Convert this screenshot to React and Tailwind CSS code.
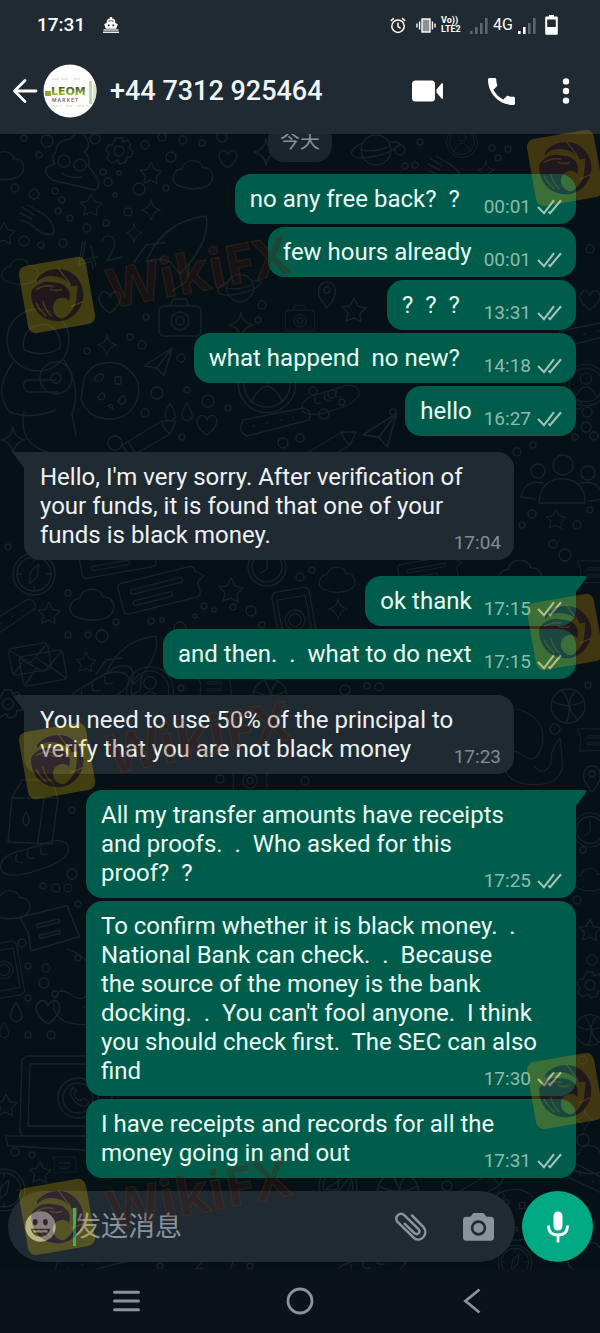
import React from "react";

const NB = "\u00a0";

const messages = [
  { from: "me", time: "00:01", text: `no any free back?${NB} ?${NB}${NB}` },
  { from: "me", time: "00:01", text: "few hours already" },
  { from: "me", time: "13:31", text: `?${NB} ?${NB} ?${NB}${NB}` },
  { from: "me", time: "14:18", text: `what happend${NB} no new?${NB}${NB}` },
  { from: "me", time: "16:27", text: "hello" },
  {
    from: "them",
    time: "17:04",
    first: true,
    wide: true,
    text: "Hello, I'm very sorry. After verification of\nyour funds, it is found that one of your\nfunds is black money.",
  },
  { from: "me", time: "17:15", first: true, text: "ok thank" },
  { from: "me", time: "17:15", text: `and then.${NB} .${NB} what to do next` },
  {
    from: "them",
    time: "17:23",
    first: true,
    wide: true,
    text: "You need to use 50% of the principal to\nverify that you are not black money",
  },
  {
    from: "me",
    time: "17:25",
    first: true,
    wide: true,
    text: `All my transfer amounts have receipts\nand proofs.${NB} .${NB} Who asked for this\nproof?${NB} ?`,
  },
  {
    from: "me",
    time: "17:30",
    wide: true,
    text: `To confirm whether it is black money.${NB} .\nNational Bank can check.${NB} .${NB} Because\nthe source of the money is the bank\ndocking.${NB} .${NB} You can't fool anyone.${NB} I think\nyou should check first.${NB} The SEC can also\nfind`,
  },
  {
    from: "me",
    time: "17:31",
    wide: true,
    text: "I have receipts and records for all the\nmoney going in and out",
  },
];

/* ---------- wallpaper ---------- */

const shapes = {
  star: <path d="M0-12 L4-4 L12-2 L6 4 L7 12 L0 8 L-8 11 L-6 3 L-12-3 L-4-4Z" />,
  spark: <path d="M0-13 Q1-2 12 0 Q2 2 0 13 Q-2 2 -12 0 Q-1-2 0-13Z" />,
  heart: <path d="M0 10 C-8 5 -13-3 -8-8 C-5-11 -1-9 0-5 C2-10 7-11 9-7 C12-2 6 6 0 10Z" />,
  cloud: <path d="M-16 10 C-24 4 -18-6 -11-6 C-9-17 8-17 10-7 C20-9 24 6 14 11 Q0 17 -16 10Z" />,
  gear: (
    <>
      <circle r="5" />
      <path d="M-3-13 L3-13 L4-9 L9-11 L12-6 L10-3 L14 1 L12 6 L8 6 L7 11 L1 13 L-2 9 L-7 12 L-12 8 L-10 3 L-13-1 L-11-6 L-7-6Z" />
    </>
  ),
  planet: (
    <>
      <circle r="15" />
      <path d="M-13-7 C-34 2 -24 12 0 6 C22 1 32-10 14-8" />
      <path d="M-15 0 Q0 3 14-4" />
    </>
  ),
  camera: (
    <>
      <rect x="-21" y="-14" width="42" height="30" rx="5" />
      <path d="M-10-14 L-7-21 L6-21 L9-14" />
      <circle r="9" cy="1" />
      <circle r="4" cy="1" />
    </>
  ),
  pin: (
    <>
      <path d="M0 14 C-7 5 -10 0 -8-6 C-5-14 6-14 8-6 C10 0 6 7 0 14Z" />
      <circle r="3" cy="-4" />
    </>
  ),
  compass: (
    <>
      <circle r="21" />
      <circle r="17" />
      <path d="M5-10 L3 3 L-5 10 L-3-3Z M0-17 V-13 M0 13 V17 M-17 0 H-13 M13 0 H17" />
    </>
  ),
  clock: (
    <>
      <circle r="19" />
      <circle r="15" />
      <path d="M0-9 V2 L-6 6" />
    </>
  ),
  mail: (
    <>
      <rect x="-22" y="-15" width="44" height="30" rx="4" />
      <path d="M-21-13 L0 4 L21-13 M-21 14 L-7 0 M21 14 L7 0" />
    </>
  ),
  bubble: (
    <>
      <path d="M-40-15 H32 Q38-15 38-9 L46-2 L38 3 V14 Q38 18 32 18 H-40 Q-45 18 -45 13 V-10 Q-45-15 -40-15Z" />
      <path d="M-32-6 H22 Q25-3 22-1 H-32 Q-35-3 -32-6Z M-32 6 H8 Q11 9 8 11 H-32 Q-35 9 -32 6Z" />
    </>
  ),
  note: (
    <>
      <path d="M-24-16 L20-16 L24 14 L-22 16 L-20 0Z" />
      <path d="M-11-6 H10 V-3 H-11Z M-11 4 H8 V7 H-11Z" />
    </>
  ),
  cookie: (
    <>
      <path d="M-26-12 Q-20-27 -5-28 Q12-31 23-17 Q33-4 26 11 Q18 28 0 28 Q-22 28 -29 8Z" />
      <path d="M-16-12 Q-10-20 -6-15 Q-8-8 -14-10Z M5-14 h6 v7 h-6Z M-12 6 q5-8 7 0 q-3 6-7 0Z M8 10 q6-10 8 0 q-4 6-8 0Z M-2 15 q5-4 5 3Z" />
    </>
  ),
  astronaut: (
    <>
      <circle r="31" cx="-2" cy="-38" />
      <path d="M-16-28 Q-20-52 6-54 Q22-48 20-30 Q4-20 -16-28Z" />
      <path d="M-27-16 Q-48 14 -30 34 Q-10 42 16 32 M24-18 Q42 10 32 36 L36 58 M-16 34 Q-22 66 8 74 M16 2 H-14 Q-20 8 -12 14 H18" />
      <circle r="16" cx="16" />
      <circle r="5" cx="16" />
    </>
  ),
  poo: (
    <>
      <path d="M-14-8 Q-14-20 0-21 Q8-30 12-28 Q24-14 14-8 Q22-2 18 6 Q36 26 24 30 L-18 20 Q-32 8 -15 4 Q-20-4 -14-8Z" />
      <circle r="6" cx="-6" cy="1" />
      <circle r="6" cx="10" cy="5" />
      <path d="M-8 13 Q0 19 11 17" />
    </>
  ),
  pencil: <path d="M-28 8 L12-16 L26-16 L20-3 L-20 20Z M12-16 Q13-8 20-3 M-22 4 L-15 16" />,
  hand: <path d="M-16-12 L-4-4 M-18-6 L-6 0 M-17 1 L-7 5 M-10-14 L0-8 Q16 0 16 14 Q8 20 -6 6" />,
  phone: (
    <>
      <rect x="-21" y="-34" width="42" height="68" rx="6" />
      <rect x="-16" y="-25" width="32" height="50" />
      <circle r="11" />
      <circle r="7" />
    </>
  ),
  people: (
    <>
      <circle r="10" cy="-20" />
      <path d="M-24 18 Q-22-8 2-6 Q22-4 22 18Z" />
      <circle r="7" cx="-25" cy="-14" />
      <circle r="7" cx="25" cy="-12" />
      <path d="M-20-2 Q-38-6 -42 12 L-28 14 M18-2 Q36-6 42 14 L26 16" />
    </>
  ),
  ball: (
    <>
      <circle r="17" />
      <path d="M-16-5 Q0 4 16-5 M-6-16 Q6 0 -2 17 M8-15 Q-6-2 10 14" />
    </>
  ),
  laptop: (
    <>
      <path d="M-36-36 H56 V44 H-38 Q-42 44 -42 38 L-40-32Z" />
      <path d="M-32-28 H50 V34 H-34Z M-56 44 H60 M-56 46 L-54 54 L60 60" />
      <circle r="20" cx="16" cy="6" />
      <circle r="15" cx="16" cy="6" />
      <path d="M8 0 q4 14 16 14 l3-4 -6-4 -3 3 q-5-3 -6-7 l2-3 -3-4Z" />
    </>
  ),
  milk: (
    <>
      <path d="M-22-16 L-12-34 H18 L24-16 L18 30 L-26 28Z M-22-16 H24 M10-16 L4 28" />
      <path d="M-8-2 Q-14 8 -8 12 Q-2 8 -8-2Z" />
    </>
  ),
  bread: <path d="M-34 14 Q-40-2 -12-8 L20-18 Q38-20 36-6 Q30 6 0 14 Q-26 22 -34 14Z M-18-4 q-4 10 6 8 M-6-8 q-4 10 6 8 M8-12 q-4 10 6 8" />,
  rocket: <path d="M-24 14 Q-10-20 26-24 Q30-2 4 24 L-4 14 Q-14 10 -24 14Z M-8-2 L-24 0 L-34 14 M12 16 L10 30 L-2 38" />,
  capsule: <path d="M-32-4 L28-16 Q38-14 34-4 L-28 12 Q-38 8 -32-4Z M-22 2 h1 M-8-1 h1 M6-4 h1 M18-7 h1" />,
  plane: <path d="M-14 4 L14-14 L6 14 L-1 6Z M14-14 L-1 6" />,
  face: (
    <>
      <circle r="26" />
      <circle r="21" />
      <path d="M-14 16 Q0-12 14 16" />
      <circle r="7" cy="-8" />
    </>
  ),
  drop: <path d="M0-10 Q-8 2 -4 8 Q2 12 6 6 Q6 0 0-10Z" />,
  tentacle: <path d="M-20-40 Q14-30 8 0 Q2 24 -16 10 Q-30 0 -34 20 Q-34 44 0 44 Q34 44 30 14 L28-8 Q16 6 18 20 Q10 36 0 24" />,
  digits: <path d="M-12-12 L-20 6 H-4 M-8-6 V14 M4-8 Q10-16 16-8 Q18 0 4 12 H20 M-15-12 L-24 9 H-11 V16" />,
};

const doodles = [
  ["cloud", 4, 166, 1], ["poo", 70, 160, 1], ["gear", 119, 151, 1], ["star", 151, 173, 0.9], ["cloud", 193, 175, 1],
  ["heart", 228, 159, 0.9], ["spark", 266, 152, 1], ["star", 91, 205, 0.9], ["spark", 151, 210, 0.8], ["hand", 38, 219, 1],
  ["spark", 134, 233, 0.7], ["star", 4, 233, 0.9], ["rocket", 175, 245, 1.2], ["planet", 376, 150, 1], ["face", 462, 142, 0.6],
  ["hand", 446, 170, 1], ["spark", 486, 170, 0.7], ["cloud", 20, 272, 0.9], ["planet", 240, 288, 0.9], ["heart", 110, 302, 1.1],
  ["digits", 100, 250, 1, -14], ["camera", 180, 320, 1], ["spark", 241, 325, 1], ["spark", 107, 345, 0.8], ["plane", 158, 362, 1],
  ["astronaut", 40, 378, 1], ["cookie", 110, 391, 1], ["pin", 327, 294, 1], ["star", 354, 310, 1], ["camera", 300, 320, 0.7],
  ["face", 267, 384, 1.1], ["capsule", 275, 424, 1], ["heart", 207, 425, 1], ["pencil", 150, 437, 1], ["spark", 13, 440, 1],
  ["drop", 170, 412, 0.9], ["drop", 187, 412, 0.9], ["plane", 380, 430, 1.2], ["bread", 330, 400, 0.8], ["pencil", 330, 448, 1],
  ["face", 586, 385, 0.8], ["capsule", 592, 335, 1], ["heart", 590, 300, 1], ["people", 563, 485, 1], ["star", 556, 519, 0.8],
  ["ball", 568, 706, 1], ["compass", 34, 574, 1], ["bubble", 162, 588, 0.95, -14], ["bubble", 120, 556, 0.9, -10],
  ["cloud", 92, 605, 1.1], ["star", 49, 613, 0.9], ["star", 231, 590, 1], ["clock", 267, 567, 1], ["cloud", 337, 580, 0.9],
  ["phone", 295, 620, 0.9, -10], ["spark", 338, 609, 0.8], ["capsule", 8, 622, 0.9, -20], ["mail", 30, 659, 0.9, -10],
  ["mail", 43, 668, 1, -10], ["star", 86, 662, 0.8], ["rocket", 130, 660, 1], ["bread", 100, 690, 1, -14], ["face", 150, 690, 0.9],
  ["gear", 8, 704, 1.1], ["note", 215, 686, 0.7], ["ball", 270, 696, 1], ["cloud", 520, 576, 1.1], ["bubble", 430, 570, 0.7, -10],
  ["note", 595, 572, 0.7], ["tentacle", 535, 745, 0.9], ["note", 595, 740, 0.7], ["pin", 592, 778, 1], ["milk", 34, 814, 1],
  ["bread", 34, 858, 0.95], ["camera", 250, 780, 0.8], ["cloud", 10, 905, 1], ["note", 50, 928, 1.1, -14], ["drop", 16, 1012, 1],
  ["heart", 48, 1012, 1.2], ["drop", 4, 1030, 0.8], ["tentacle", 84, 985, 0.9], ["laptop", 62, 1092, 1], ["star", 6, 1105, 0.9],
  ["phone", 4, 970, 0.8, -10], ["star", 40, 1172, 0.9], ["note", 65, 1165, 0.5], ["compass", 4, 1190, 1], ["clock", 590, 830, 0.9],
  ["cloud", 590, 880, 0.8], ["star", 590, 930, 0.9], ["gear", 590, 985, 1], ["ball", 590, 1030, 0.9], ["cloud", 590, 1160, 1],
  ["spark", 585, 1120, 0.8], ["plane", 340, 1185, 1], ["ball", 398, 1192, 1.2], ["clock", 338, 1186, 1], ["pencil", 480, 1188, 1],
  ["cookie", 515, 1215, 0.9], ["capsule", 585, 1180, 1, 40], ["compass", 515, 1262, 0.8], ["capsule", 90, 1266, 1],
  ["rocket", 210, 1270, 0.9], ["bread", 370, 1268, 1], ["cloud", 590, 1258, 1.1],
];

const dots = [
  [24, 138, 3], [47, 141, 6], [39, 155, 3], [95, 139, 5], [145, 145, 4], [162, 137, 4], [171, 157, 5], [183, 140, 4], [202, 143, 3],
  [222, 137, 5], [103, 172, 3], [119, 173, 2], [108, 182, 4], [139, 189, 6], [166, 188, 3], [15, 188, 4], [34, 194, 5], [55, 191, 3],
  [62, 200, 3], [58, 211, 3], [70, 218, 3], [87, 228, 4], [106, 223, 3], [128, 212, 4], [115, 195, 2], [24, 241, 5], [63, 243, 4],
  [41, 245, 3], [400, 150, 5], [420, 142, 3], [415, 165, 3], [405, 166, 3], [492, 148, 3], [508, 149, 3], [498, 158, 3],
  [146, 317, 3], [130, 337, 3], [142, 345, 4], [87, 351, 3], [157, 393, 6], [187, 390, 3], [208, 401, 6], [228, 408, 3], [145, 413, 4],
  [182, 437, 3], [115, 443, 7], [283, 443, 5], [300, 438, 4], [262, 305, 4], [258, 320, 3], [181, 358, 4], [313, 391, 4], [332, 394, 4],
  [342, 402, 3], [393, 412, 3], [324, 414, 5], [590, 249, 4], [578, 405, 4], [587, 412, 5], [586, 427, 5], [594, 436, 4], [575, 437, 3],
  [533, 445, 3], [517, 452, 4], [532, 514, 4], [522, 525, 3], [577, 525, 4], [590, 510, 3], [553, 544, 4], [565, 555, 6], [300, 577, 4],
  [312, 570, 3], [8, 547, 3], [68, 593, 3], [204, 606, 3], [195, 616, 2], [214, 610, 2], [233, 607, 3], [251, 611, 5], [262, 625, 3],
  [151, 621, 3], [116, 622, 3], [68, 635, 3], [88, 635, 3], [102, 636, 6], [162, 620, 2], [180, 628, 6], [181, 688, 3], [345, 690, 5],
  [367, 686, 3], [379, 687, 4], [555, 729, 5], [588, 685, 3], [72, 810, 3], [56, 888, 4], [43, 886, 3], [68, 888, 4], [72, 874, 5],
  [220, 779, 4], [305, 781, 4], [78, 904, 3], [22, 943, 4], [28, 966, 3], [46, 968, 4], [44, 983, 5], [55, 994, 3], [28, 998, 3],
  [78, 958, 3], [28, 1035, 3], [51, 1035, 4], [15, 1152, 4], [32, 1155, 3], [583, 850, 3], [577, 900, 4], [592, 960, 5], [583, 1140, 6],
  [447, 1186, 5], [500, 1196, 4], [160, 1266, 3], [250, 1266, 3], [583, 1060, 4],
];

function Wallpaper() {
  return (
    <svg
      viewBox="0 134 600 1135"
      preserveAspectRatio="xMidYMin slice"
      className="pointer-events-none absolute inset-0 h-full w-full"
      fill="none"
      stroke="#182325"
      strokeWidth="1.4"
      strokeLinejoin="round"
      strokeLinecap="round"
      aria-hidden="true"
    >
      {doodles.map(([kind, x, y, s, r = 0], i) => (
        <g key={i} transform={`translate(${x} ${y}) rotate(${r}) scale(${s})`}>
          {shapes[kind]}
        </g>
      ))}
      {dots.map(([x, y, r], i) => (
        <circle key={i} cx={x} cy={y} r={r} />
      ))}
    </svg>
  );
}

/* ---------- brand marks laid over the page ---------- */

function Eagle({ ink }) {
  return (
    <g fill={ink} stroke="none">
      <path d="M-17-19 C-6-29 12-28 21-16 C29-5 28 10 18 19 C12 25 5 27 -2 26 C8 23 15 17 18 9 L22-6 L16-6 C12-14 4-20 -6-20 C-10-20 -14-19 -17-16Z" />
      <path d="M-25-7 C-20-14 -10-17 -2-13 C6-12 12-7 13 1 L11 8 C9 4 5 3 1 4 C-6 6 -8 13 -5 19 C-3 23 2 25 7 25 C-2 28 -12 25 -18 19 C-25 12 -27 2 -25-7Z" />
    </g>
  );
}

function Emblem({ x, y, color }) {
  return (
    <g transform={`translate(${x} ${y}) rotate(-10)`}>
      <g mask="url(#emblem-cutout)">
        <rect x="-34" y="-34" width="68" height="68" rx="8" fill={color} opacity="0.25" />
      </g>
      <g opacity="0.32">
        <Eagle ink="#3d1830" />
      </g>
      <path
        d="M-6-7 Q0-3 6-5 M-20-9 Q-10-13 -2-9 M-22 4 Q-20 12 -14 19 M-15 3 Q-15 12 -9 20 M6-26 L15-8 M24 11 L12 14"
        fill="none"
        stroke={color}
        strokeWidth="1.4"
        opacity="0.2"
      />
    </g>
  );
}

function Brand({ y }) {
  return (
    <g>
      <Emblem x={57} y={y} color="#f2cc00" />
      <text
        transform={`translate(112 ${y + 13}) rotate(-11)`}
        className="font-['Open_Sans',sans-serif] text-[54px] font-bold"
        fill="#4a1714"
        fillOpacity="0.26"
        stroke="#8a4c14"
        strokeOpacity="0.2"
        strokeWidth="1.4"
      >
        WikiFX
      </text>
    </g>
  );
}

function BrandLayer() {
  return (
    <svg
      viewBox="0 0 600 1333"
      preserveAspectRatio="xMidYMin slice"
      className="pointer-events-none absolute inset-0 h-full w-full"
      aria-hidden="true"
    >
      <defs>
        <mask id="emblem-cutout" maskUnits="userSpaceOnUse" x="-40" y="-40" width="80" height="80">
          <rect x="-40" y="-40" width="80" height="80" fill="#fff" />
          <Eagle ink="#333" />
        </mask>
      </defs>
      {[295, 761, 1217].map((y) => (
        <Brand key={y} y={y} />
      ))}
      {[168, 632, 1091].map((y) => (
        <Emblem key={y} x={565} y={y} color="#f0a800" />
      ))}
    </svg>
  );
}

/* ---------- status bar and header ---------- */

function Signal({ lit }) {
  return (
    <svg width="18" height="17" viewBox="0 0 18 17" aria-hidden="true">
      {[3, 7, 11, 16].map((h, i) => (
        <rect key={h} x={i * 5} y={17 - h} width="2.6" height={h} fill={i < lit ? "#fff" : "#5f686e"} />
      ))}
    </svg>
  );
}

function StatusBar() {
  return (
    <div className="flex h-[50px] items-center pr-[42px] pl-[37px] text-white">
      <span className="text-[19px] leading-6 font-medium">17:31</span>
      <svg className="ml-[18px]" width="16" height="16" viewBox="0 0 16 16" fill="#fff" aria-label="Ferry">
        <path fillRule="evenodd" d="M6.8 0h2.4v1.8h1.6l1.4 1.6v2.4l2.6 1.4-1.6 4.6H2.8L1.2 7.2l2.6-1.4V3.4l1.4-1.6h1.6Zm-1.2 3.4v1.4L8 4l2.4.8V3.4ZM4.8 7.6v1.6h1.8V7.6Zm4.6 0v1.6h1.8V7.6Z" />
        <rect x="0.5" y="12.4" width="15" height="1.2" />
        <rect x="0" y="14.6" width="16" height="1.3" />
      </svg>
      <div className="ml-auto flex items-center">
        <svg width="16" height="17" viewBox="0 0 16 17" fill="none" stroke="#fff" strokeWidth="1.5" aria-label="Alarm">
          <circle cx="8" cy="9.2" r="6.2" />
          <path d="M8 5.5v4l2.6 1.8M0.8 3.8 4 1.2M15.2 3.8 12 1.2" />
        </svg>
        <svg className="ml-[10px]" width="20" height="15" viewBox="0 0 20 15" aria-label="Vibrate">
          <rect x="6" y="1" width="8" height="13" fill="#8b9296" stroke="#fff" strokeWidth="1.4" />
          <path d="M3.6 3.5v8M16.4 3.5v8M1 5.5v4M19 5.5v4" stroke="#fff" strokeWidth="1.4" />
        </svg>
        <div className="ml-[5px] w-[21px] text-[9px] leading-[9px] font-bold">
          <div>Vo))</div>
          <div>LTE2</div>
        </div>
        <span className="ml-2"><Signal lit={0} /></span>
        <span className="ml-[5px] text-[16px] leading-5">4G</span>
        <span className="ml-[5px]"><Signal lit={2} /></span>
        <svg className="ml-[9px]" width="13" height="20" viewBox="0 0 13 20" aria-label="Battery">
          <path fillRule="evenodd" fill="#fff" d="M4 0h5v1.6h2.8q1 0 1 1v16.2q0 1-1 1H1.2q-1 0-1-1V2.6q0-1 1-1H4ZM2.2 4.6v7.4h8.6V4.6Z" />
        </svg>
      </div>
    </div>
  );
}

function Avatar() {
  return (
    <svg width="54" height="54" viewBox="0 0 54 54" role="img" aria-label="LEOM MARKET">
      <defs>
        <clipPath id="avatar-clip"><circle cx="27" cy="27" r="26.5" /></clipPath>
        <linearGradient id="avatar-ink" x1="0" y1="0" x2="0" y2="1">
          <stop offset="0.2" stopColor="#4a5c26" />
          <stop offset="0.8" stopColor="#9cc52c" />
        </linearGradient>
      </defs>
      <circle cx="27" cy="27" r="26.5" fill="#fdfdfc" />
      <g clipPath="url(#avatar-clip)">
        <path d="M9 15h17M30 15h8M8 42h10M22 42h7M34 42h12" stroke="#d3d6cf" strokeWidth="1" strokeDasharray="7 2" />
        <rect x="2" y="27" width="6" height="5" fill="#87a83c" />
        <rect x="46" y="17" width="3" height="23" fill="#c3d79a" />
        <rect x="50" y="20" width="4" height="16" fill="#dbe7c2" />
        <text x="8" y="31" fill="url(#avatar-ink)" className="font-['DejaVu_Sans',sans-serif] text-[11px] font-bold">LEOM</text>
        <text x="9" y="38" fill="#77737a" className="font-[Roboto,sans-serif] text-[5px] font-bold">M A R K E T</text>
      </g>
    </svg>
  );
}

function Header() {
  return (
    <header className="relative shrink-0 bg-[#202a32]">
      <StatusBar />
      <div className="flex h-[84px] items-center pr-[22px] pb-[2px] pl-[12px] text-white">
        <button type="button" aria-label="Back" className="shrink-0">
          <svg width="26" height="26" viewBox="0 0 26 26" fill="none" stroke="#fff" strokeWidth="2.8" strokeLinecap="round" strokeLinejoin="round">
            <path d="M24 13H3M13 2.5 2.5 13 13 23.5" />
          </svg>
        </button>
        <span className="ml-[5px] shrink-0"><Avatar /></span>
        <h1 className="ml-[13px] text-[27px] leading-8 font-medium whitespace-nowrap text-[#eef6fb]">+44 7312 925464</h1>
        <div className="ml-auto flex items-center">
          <button type="button" aria-label="Video call">
            <svg width="32" height="22" viewBox="0 0 32 22" fill="#fff">
              <rect x="0" y="0.5" width="23" height="21" rx="3.5" />
              <path d="M24.5 9.5 29.5 3.6Q31 2.4 31 4.2v13.6q0 1.8-1.5.6L24.5 12.5Z" />
            </svg>
          </button>
          <button type="button" aria-label="Voice call" className="ml-[44px]">
            <svg width="27" height="27" viewBox="3 3 18 18" fill="#fff">
              <path d="M6.62 10.79c1.44 2.83 3.76 5.14 6.59 6.59l2.2-2.2c.27-.27.67-.36 1.02-.24 1.12.37 2.33.57 3.57.57.55 0 1 .45 1 1V20c0 .55-.45 1-1 1-9.39 0-17-7.61-17-17 0-.55.45-1 1-1h3.5c.55 0 1 .45 1 1 0 1.25.2 2.45.57 3.57.11.35.03.74-.25 1.02l-2.2 2.2z" />
            </svg>
          </button>
          <button type="button" aria-label="More options" className="ml-[39px]">
            <svg width="24" height="26" viewBox="0 0 24 26" fill="#fff">
              <circle cx="12" cy="3.4" r="3.2" />
              <circle cx="12" cy="13" r="3.2" />
              <circle cx="12" cy="22.6" r="3.2" />
            </svg>
          </button>
        </div>
      </div>
    </header>
  );
}

/* ---------- conversation ---------- */

function Ticks() {
  return (
    <svg width="25" height="16" viewBox="0 0 25 16" fill="none" stroke="#9fc3b9" strokeWidth="2.1" aria-label="Delivered">
      <path d="M1 8 7 14.2 17 1.2M11.5 12.6 13 14.2 24 1.2" />
    </svg>
  );
}

function Message({ from, time, text, first, wide }) {
  const mine = from === "me";
  return (
    <li className={`flex ${mine ? "justify-end" : "justify-start"} ${first ? "mt-4" : "mt-[3px]"}`}>
      <div
        className={`relative max-w-full rounded-2xl pt-[11px] pb-[10px] ${wide ? "w-[490px]" : ""} ${
          mine ? "bg-[#005c4b] pr-[14px] pl-[15px] text-[#e9fbf6]" : "bg-[#202a32] pr-[13px] pl-4 text-[#eef2f4]"
        } ${first ? (mine ? "rounded-tr-none" : "rounded-tl-none") : ""}`}
      >
        {first && (
          <svg
            className={`absolute top-0 ${mine ? "left-full" : "right-full -scale-x-100"}`}
            width="12"
            height="16"
            viewBox="0 0 12 16"
            fill={mine ? "#005c4b" : "#202a32"}
            aria-hidden="true"
          >
            <path d="M0 0H9Q11.5 0 10 2.5L0 16Z" />
          </svg>
        )}
        <span className="text-[24px] leading-[29px] whitespace-pre-line">{text}</span>
        <span className="float-right mt-[14px] ml-3 flex h-[15px] items-center gap-[6px]">
          <time className={`text-[19px] leading-5 ${mine ? "text-[#8dbbaf]" : "text-[#838c92]"}`}>{time}</time>
          {mine && <Ticks />}
        </span>
      </div>
    </li>
  );
}

function Composer() {
  return (
    <form className="flex items-center gap-[7px] pt-[13px] pr-[7px] pb-[7px] pl-[8px]" onSubmit={(e) => e.preventDefault()}>
      <div className="flex h-[71px] min-w-0 flex-1 items-center rounded-full bg-[#202a32] pr-[21px] pl-[17px]">
        <button type="button" aria-label="Emoji" className="shrink-0">
          <svg width="31" height="31" viewBox="0 0 31 31">
            <circle cx="15.5" cy="15.5" r="15.2" fill="#a3acb2" />
            <ellipse cx="10.2" cy="11.2" rx="2.4" ry="3.1" fill="#202a32" />
            <ellipse cx="20.4" cy="11.2" rx="2.4" ry="3.1" fill="#202a32" />
            <path d="M5.6 17.8h19.8q-2.5 8-9.9 8t-9.9-8Z" fill="#202a32" />
            <path d="M8 19.2h15l-1 2.4H9Z" fill="#a3acb2" />
          </svg>
        </button>
        <span className="-mr-0.5 ml-[17px] h-[38px] w-[3px] shrink-0 bg-[#00a884]" />
        <input
          type="text"
          aria-label="发送消息"
          placeholder="发送消息"
          className="min-w-0 flex-1 bg-transparent font-[Roboto,'Noto_Sans_CJK_SC',sans-serif] text-[27px] leading-9 text-white outline-none placeholder:text-[#87949b]"
        />
        <button type="button" aria-label="Attach" className="shrink-0">
          <svg width="34" height="30" viewBox="0 0 34 30" fill="none" stroke="#87949b" strokeWidth="2.5" strokeLinecap="round">
            <path d="M18 3.5 29.5 15.2C35 21.5 27 31.5 20 26L3.8 10.2C-0.5 5.2 5.5-0.8 10.5 3.4L24.5 17.2C27 20.5 23.5 23.8 20.2 21L10.8 11.8" />
          </svg>
        </button>
        <button type="button" aria-label="Camera" className="ml-[35px] shrink-0">
          <svg width="31" height="28" viewBox="0 0 31 28">
            <path d="M10.5 0h10l3 3.8h4q3.5 0 3.5 3.5v17q0 3.5-3.5 3.5h-24Q0 27.8 0 24.3v-17q0-3.5 3.5-3.5h4Z" fill="#87949b" />
            <circle cx="15.5" cy="15" r="6.4" fill="#87949b" stroke="#202a32" strokeWidth="2.6" />
          </svg>
        </button>
      </div>
      <button type="button" aria-label="Voice message" className="flex h-[71px] w-[71px] shrink-0 items-center justify-center rounded-full bg-[#00a884]">
        <svg width="22" height="32" viewBox="0 0 22 32">
          <rect x="6.5" y="0.5" width="9" height="19" rx="4.5" fill="#fff" />
          <path d="M1.5 14.5q0 9.5 9.5 9.5t9.5-9.5M11 24v7.5" fill="none" stroke="#fff" strokeWidth="2.8" />
        </svg>
      </button>
    </form>
  );
}

function NavBar() {
  return (
    <nav className="flex h-16 shrink-0 items-center justify-between px-[113px]">
      <button type="button" aria-label="Recent apps">
        <svg width="27" height="22" viewBox="0 0 27 22" stroke="#8b9298" strokeWidth="3" strokeLinecap="round">
          <path d="M1.5 2.2h24M1.5 11h24M1.5 19.8h24" />
        </svg>
      </button>
      <button type="button" aria-label="Home">
        <svg width="28" height="28" viewBox="0 0 28 28" fill="none" stroke="#8b9298" strokeWidth="2.8">
          <circle cx="14" cy="14" r="12" />
        </svg>
      </button>
      <button type="button" aria-label="Back">
        <svg width="27" height="26" viewBox="0 0 27 26" fill="none" stroke="#8b9298" strokeWidth="2.8">
          <path d="M19.5 1.5 5.5 13l14 11.5" />
        </svg>
      </button>
    </nav>
  );
}

export default function App() {
  return (
    <div className="relative flex h-screen flex-col overflow-hidden bg-[#0a121a] font-[Roboto,'Noto_Sans_CJK_SC',sans-serif]">
      <Header />
      <main className="relative flex min-h-0 flex-1 flex-col justify-end overflow-hidden bg-[#061117]">
        <Wallpaper />
        <div className="relative">
          <div className="mb-3 flex justify-center">
            <span className="rounded-2xl bg-[#1b262c] px-3 pt-1 pb-[7px] text-[20px] leading-7 text-[#87919a]">今天</span>
          </div>
          <ol className="px-6">
            {messages.map((m, i) => (
              <Message key={i} {...m} />
            ))}
          </ol>
          <Composer />
        </div>
      </main>
      <NavBar />
      <BrandLayer />
    </div>
  );
}
